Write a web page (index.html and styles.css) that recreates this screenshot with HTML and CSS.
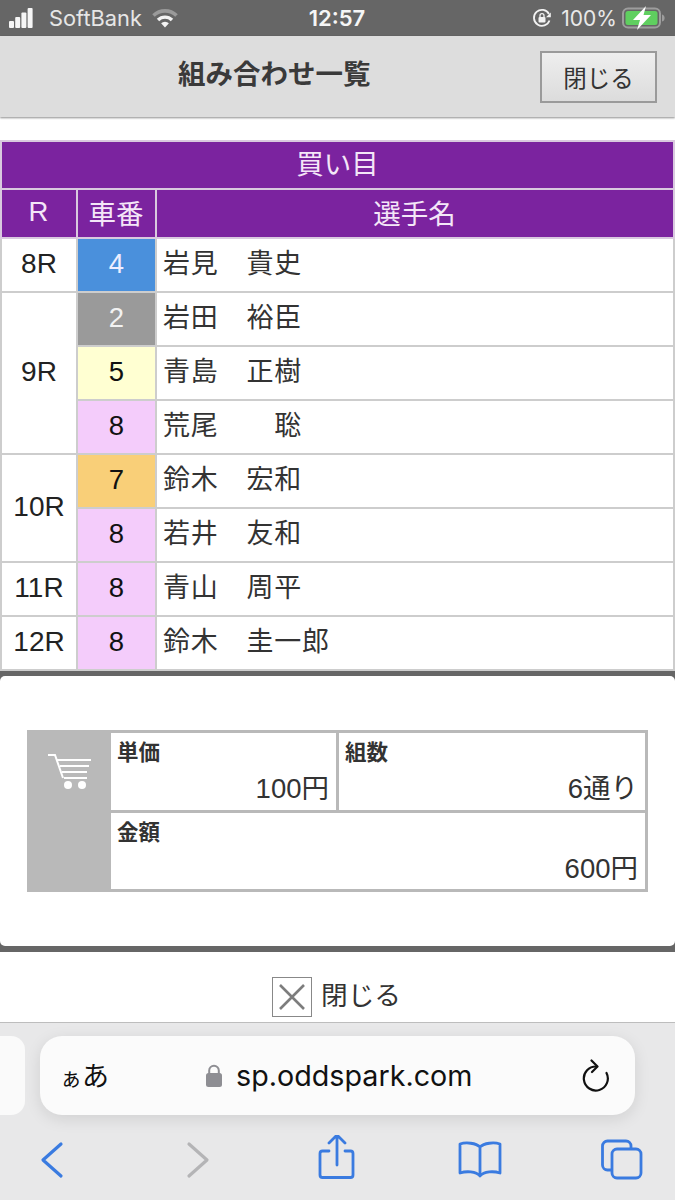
FILE: index.html
```html
<!DOCTYPE html>
<html lang="ja">
<head>
<meta charset="utf-8">
<title>組み合わせ一覧</title>
<link rel="stylesheet" href="styles.css">
</head>
<body>
<div class="page">
  <div class="status">
    <div class="status-left">
      <svg class="sig" width="24" height="20" viewBox="0 0 24 20"><rect x="0" y="13" width="5" height="7" rx="1"/><rect x="6.200" y="9" width="5" height="11" rx="1"/><rect x="12.400" y="4.500" width="5" height="15.500" rx="1"/><rect x="18.600" y="0" width="5" height="20" rx="1"/></svg>
      <span class="carrier">SoftBank</span>
      <svg class="wifi" width="26" height="20" viewBox="0 0 26 20"><path d="M1.500 7.500a16.500 16.500 0 0 1 23 0" fill="none" stroke="#9a9a9a" stroke-width="3.600"/><path d="M6 12a10 10 0 0 1 14 0" fill="none" stroke="#f4f4f4" stroke-width="3.400"/><path d="M13 19.500l-3.900-4.200a5.500 5.500 0 0 1 7.800 0z" fill="#f4f4f4"/></svg>
    </div>
    <div class="time">12:57</div>
    <div class="status-right">
      <svg width="20" height="20" viewBox="0 0 20 20"><path d="M17.500 12.500A8 8 0 1 1 17 6" fill="none" stroke="#f2f2f2" stroke-width="1.800"/><path d="M18.800 4.500v4.800h-4.800z" fill="#f2f2f2"/><rect x="6.500" y="9" width="7" height="5.500" rx="1" fill="#f2f2f2"/><path d="M8 9V7.600a2 2 0 0 1 4 0V9" fill="none" stroke="#f2f2f2" stroke-width="1.300"/></svg>
      <span class="pct">100%</span>
      <svg width="43" height="24" viewBox="0 0 43 24"><rect x="1" y="2.500" width="37" height="19" rx="5" fill="none" stroke="#9d9d9d" stroke-width="2"/><rect x="3.500" y="5" width="32" height="14" rx="2.500" fill="#5fcf5f"/><path d="M40 8.500c2 .5 2.600 2 2.600 3.500s-.6 3-2.600 3.500z" fill="#9d9d9d"/><path d="M24 0 11 14h7l-3 10 14-15h-7.500z" fill="#fff"/></svg>
    </div>
  </div>

  <header class="head">
    <h1 class="title">組み合わせ一覧</h1>
    <button class="close-btn" type="button">閉じる</button>
  </header>

  <table class="bets">
    <colgroup><col class="c-r"><col class="c-n"><col class="c-name"></colgroup>
    <thead>
      <tr class="h1"><th colspan="3">買い目</th></tr>
      <tr class="h2"><th>R</th><th>車番</th><th>選手名</th></tr>
    </thead>
    <tbody>
      <tr><td class="race">8R</td><td class="num n4">4</td><td class="name">岩見　貴史</td></tr>
      <tr><td class="race" rowspan="3">9R</td><td class="num n2">2</td><td class="name">岩田　裕臣</td></tr>
      <tr><td class="num n5">5</td><td class="name">青島　正樹</td></tr>
      <tr><td class="num n8">8</td><td class="name">荒尾　　聡</td></tr>
      <tr><td class="race" rowspan="2">10R</td><td class="num n7">7</td><td class="name">鈴木　宏和</td></tr>
      <tr><td class="num n8">8</td><td class="name">若井　友和</td></tr>
      <tr><td class="race">11R</td><td class="num n8">8</td><td class="name">青山　周平</td></tr>
      <tr><td class="race">12R</td><td class="num n8">8</td><td class="name">鈴木　圭一郎</td></tr>
    </tbody>
  </table>

  <section class="panel">
    <div class="panel-inner">
      <div class="summary">
        <div class="cart">
          <svg width="46" height="38" viewBox="0 0 46 38"><path d="M1 2h7l8 23" fill="none" stroke="#fff" stroke-width="2"/><path d="M10 7h34M13 13h29M15 19h25M17 25h23" fill="none" stroke="#fff" stroke-width="2"/><circle cx="21" cy="32" r="4" fill="#fff"/><circle cx="35" cy="32" r="4" fill="#fff"/></svg>
        </div>
        <div class="fields">
          <div class="field"><div class="label">単価</div><div class="value">100円</div></div>
          <div class="field"><div class="label">組数</div><div class="value">6通り</div></div>
          <div class="field wide"><div class="label">金額</div><div class="value">600円</div></div>
        </div>
      </div>
    </div>
  </section>

  <div class="close-row">
    <span class="x-box"><svg width="38" height="38" viewBox="0 0 38 38"><path d="M7 7l24 24M31 7 7 31" fill="none" stroke="#7d7d7d" stroke-width="2.600"/></svg></span>
    <span class="close-text">閉じる</span>
  </div>

  <div class="browser">
    <div class="url-row">
      <div class="tab-stub"></div>
      <div class="url">
        <span class="aa"><small>ぁ</small>あ</span>
        <span class="addr">
          <svg width="16" height="24" viewBox="0 0 16 24"><rect x="0" y="9" width="16" height="14" rx="2.500" fill="#8e8e93"/><path d="M3.200 10V6.500a4.800 4.800 0 0 1 9.600 0V10" fill="none" stroke="#8e8e93" stroke-width="2"/></svg>
          <span>sp.oddspark.com</span>
        </span>
        <svg width="28" height="34" viewBox="0 0 28 34"><path d="M15.500 7.500A12 12 0 1 0 25.500 14" fill="none" stroke="#111" stroke-width="2.200" stroke-linecap="round"/><path d="M10.500 1.500 16.500 7.500 11 13" fill="none" stroke="#111" stroke-width="2.200" stroke-linecap="round" stroke-linejoin="round"/></svg>
      </div>
    </div>
    <nav class="tools">
      <svg width="50" height="50" viewBox="0 0 50 50"><path d="M34 9 16 25l18 16" fill="none" stroke="#3a7be0" stroke-width="3.200" stroke-linecap="round" stroke-linejoin="round"/></svg>
      <svg width="50" height="50" viewBox="0 0 50 50"><path d="M19 9l18 16-18 16" fill="none" stroke="#b4b4b6" stroke-width="3.200" stroke-linecap="round" stroke-linejoin="round"/></svg>
      <svg width="50" height="50" viewBox="0 0 50 50"><path d="M17 17h-6.500a2.500 2.500 0 0 0-2.500 2.500v21.500a2.500 2.500 0 0 0 2.500 2.500h28a2.500 2.500 0 0 0 2.500-2.500v-21.500a2.500 2.500 0 0 0-2.500-2.500H33M25 31V2M17 9l8-8 8 8" transform="translate(0 -1)" fill="none" stroke="#3a7be0" stroke-width="2.800" stroke-linecap="round" stroke-linejoin="round"/></svg>
      <svg width="50" height="50" viewBox="0 0 50 50"><path d="M25 12C21 8 11 7 5 9v29c6-2 16-2 20 3 4-5 14-5 20-3V9c-6-2-16-1-20 3zM25 12v29" fill="none" stroke="#3a7be0" stroke-width="2.800" stroke-linecap="round" stroke-linejoin="round"/></svg>
      <svg width="50" height="50" viewBox="0 0 50 50"><rect x="15" y="14" width="29" height="29" rx="5" fill="none" stroke="#3a7be0" stroke-width="2.800"/><path d="M15 35h-4.500a5 5 0 0 1-5-5V11a5 5 0 0 1 5-5H29a5 5 0 0 1 5 5v3" fill="none" stroke="#3a7be0" stroke-width="2.800"/></svg>
    </nav>
  </div>
</div>
</body>
</html>
```

FILE: styles.css
```css
* { box-sizing: border-box; }
html, body { margin: 0; padding: 0; }
body {
  font-family: "Liberation Sans", "Noto Sans CJK JP", sans-serif;
  color: #222;
  background: #fff;
}
.page {
  width: 675px;
  height: 1200px;
  overflow: hidden;
  display: flex;
  flex-direction: column;
}

/* status bar */
.status {
  height: 36px;
  flex: none;
  background: #666;
  color: #f2f2f2;
  display: grid;
  grid-template-columns: 1fr auto 1fr;
  align-items: center;
  padding: 0 10px 0 9px;
  font-family: Inter, "Liberation Sans", sans-serif;
}
.status-left, .status-right { display: flex; align-items: center; }
.status-right { justify-content: flex-end; }
.sig { fill: #f6f6f6; margin-right: 16px; }
.carrier { font-size: 21.800px; margin-right: 10px; color: #e6e6e6; }
.time { font-size: 22px; font-weight: 600; color: #f6f6f6; }
.pct { font-size: 21px; margin: 0 5px 0 9px; color: #e9e9e9; }

/* header */
.head {
  height: 81px;
  flex: none;
  background: #ddd;
  box-shadow: 0 1px 2px rgba(0,0,0,.45);
  position: relative;
  display: flex;
  align-items: center;
  padding: 0 18px 0 178px;
  justify-content: space-between;
}
.title {
  margin: 0 0 10px;
  font-size: 27.500px;
  font-weight: 700;
  color: #3a3a3a;
  font-family: "Noto Sans CJK JP", sans-serif;
}
.close-btn {
  width: 117px;
  height: 52px;
  border: 2px solid #9a9a9a;
  background: linear-gradient(#eee, #dcdcdc);
  font-family: "Noto Sans CJK JP", sans-serif;
  font-size: 23.500px;
  color: #333;
  padding: 0;
}

/* bets table */
.bets {
  flex: none;
  margin-top: 23px;
  width: 675px;
  table-layout: fixed;
  border-collapse: collapse;
  font-size: 27px;
  font-family: "Liberation Sans", "Noto Sans CJK JP", sans-serif;
}
.c-r { width: 76px; }
.c-n { width: 79px; }
.bets th, .bets td {
  border: 2px solid #cdcdcd;
  padding: 0;
  text-align: center;
  font-weight: 400;
}
.bets th { background: #7b239f; color: #f4e6f8; border-color: #d9c9df; }
.h1 th { height: 48px; font-size: 27.500px; padding-bottom: 6px; }
.h2 th { height: 49px; font-size: 27.500px; padding: 0 1px 3px 0; }
.bets td { height: 54px; color: #222; }
.bets td.name { text-align: left; padding: 0 0 7px 6px; letter-spacing: .8px; color: #333; }
.bets td.race { font-size: 28px; padding-bottom: 2px; }
.bets td.num { font-size: 27.500px; padding-bottom: 3px; }
.bets td.n4 { background: #4a90dc; color: #eef; }
.bets td.n2 { background: #9a9a9a; color: #f2f2f2; }
.bets td.n5 { background: #ffffd2; color: #111; }
.bets td.n8 { background: #f4ccfb; color: #111; }
.bets td.n7 { background: #f9cf78; color: #111; }

/* summary panel */
.panel {
  flex: none;
  height: 281px;
  padding: 5px 0 6px;
  background: #666;
}
.panel-inner {
  height: 100%;
  background: #fff;
  border-radius: 5px;
  padding: 54px 27px 0;
}
.summary {
  width: 621px;
  height: 162px;
  display: flex;
  background: #b9b9b9;
  padding: 3px;
  padding-left: 0;
}
.cart { width: 84px; flex: none; padding: 20px 0 0 20px; }
.fields {
  flex: 1;
  display: grid;
  grid-template-columns: 225px 1fr;
  grid-template-rows: 1fr 1fr;
  gap: 3px;
}
.field {
  background: #fff;
  padding: 3px 7px 0 6px;
  display: flex;
  flex-direction: column;
}
.wide { grid-column: 1 / 3; }
.label { font-size: 21.500px; font-weight: 700; line-height: 29px; color: #333; font-family: "Noto Sans CJK JP", sans-serif; }
.value { font-size: 27.500px; line-height: 36px; text-align: right; color: #333; margin-top: 6px; }

/* close row */
.close-row {
  flex: none;
  height: 71px;
  border-bottom: 1px solid #bdbdbd;
  display: flex;
  align-items: flex-start;
  padding: 25px 0 0 272px;
  gap: 9px;
}
.x-box {
  width: 40px;
  height: 40px;
  border: 1px solid #888;
  display: block;
}
.x-box svg { display: block; }
.close-text { font-size: 26.700px; line-height: 34px; color: #333; font-family: "Noto Sans CJK JP", sans-serif; }

/* browser chrome */
.browser {
  flex: 1;
  background: #e8e8e9;
  display: flex;
  flex-direction: column;
  padding-top: 13px;
}
.url-row { display: flex; gap: 15px; }
.tab-stub {
  width: 25px;
  height: 79px;
  flex: none;
  background: #fafafa;
  border-radius: 0 14px 14px 0;
}
.url {
  width: 595px;
  height: 79px;
  flex: none;
  background: #fbfbfb;
  border-radius: 22px;
  box-shadow: 0 4px 16px rgba(0,0,0,.10);
  display: flex;
  align-items: center;
  padding: 0 26px 0 20px;
  color: #111;
}
.aa { font-size: 27px; line-height: 36px; font-family: "Noto Sans CJK JP", sans-serif; }
.aa small { font-size: 22px; }
.addr {
  display: flex;
  align-items: center;
  gap: 14px;
  font-size: 28.700px;
  font-family: Inter, "Liberation Sans", sans-serif;
  margin: 0 auto 0 97px;
}
.tools {
  display: flex;
  justify-content: space-between;
  padding: 20px 28px 0 27px;
}
```
